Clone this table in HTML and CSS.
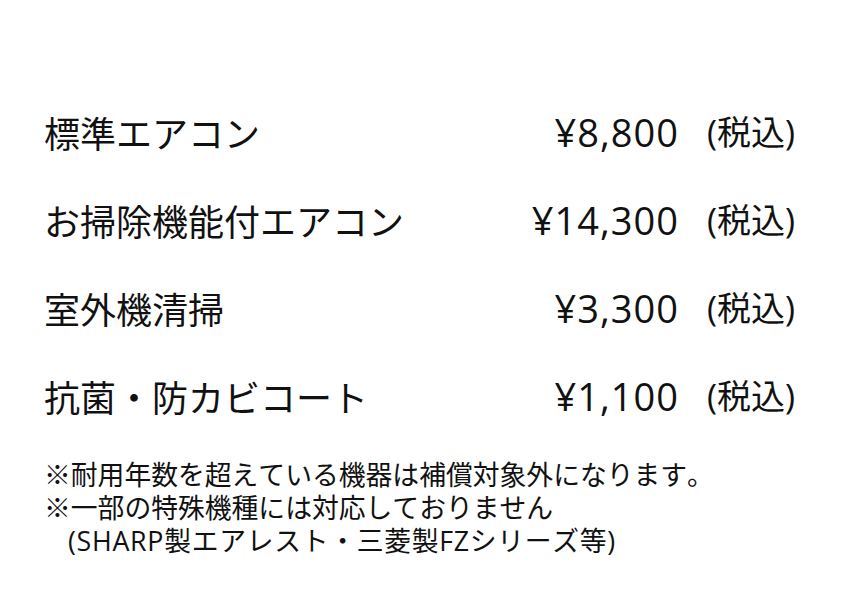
FILE: index.html
```html
<!DOCTYPE html>
<html lang="ja">
<head>
<meta charset="utf-8">
<link rel="stylesheet" href="styles.css">
</head>
<body>
<main class="page">
  <section class="prices">
    <div class="row"><span class="name">標準エアコン</span><span class="price">¥8,800</span><span class="tax">(税込)</span></div>
    <div class="row"><span class="name">お掃除機能付エアコン</span><span class="price">¥14,300</span><span class="tax">(税込)</span></div>
    <div class="row"><span class="name">室外機清掃</span><span class="price">¥3,300</span><span class="tax">(税込)</span></div>
    <div class="row"><span class="name">抗菌・防カビコート</span><span class="price">¥1,100</span><span class="tax">(税込)</span></div>
  </section>
  <section class="notes">
    <p>※耐用年数を超えている機器は補償対象外になります。</p>
    <p>※一部の特殊機種には対応しておりません</p>
    <p class="indent">(SHARP製エアレスト・三菱製FZシリーズ等)</p>
  </section>
</main>
</body>
</html>
```

FILE: styles.css
```css
html, body {
  margin: 0;
  padding: 0;
  background: #ffffff;
}
body {
  font-family: "Open Sans", "Noto Sans CJK JP", sans-serif;
  color: #111111;
  font-kerning: none;
}
.page {
  width: 751px;
  padding: 88px 0 0 44px;
}
.prices {
  display: flex;
  flex-direction: column;
}
.row {
  display: grid;
  grid-template-columns: 1fr auto auto;
  column-gap: 28px;
  align-items: center;
  height: 88px;
  font-size: 36px;
  line-height: 1;
}
.name {
  font-family: "Noto Sans CJK JP", sans-serif;
}
.price {
  text-align: right;
  font-size: 38px;
  letter-spacing: 1px;
}
.tax {
  font-size: 34px;
}
.notes {
  margin-top: 18px;
  font-size: 26.8px;
  line-height: 33px;
}
.notes p {
  margin: 0;
}
.notes .indent {
  padding-left: 24px;
  letter-spacing: 0.7px;
}
```
